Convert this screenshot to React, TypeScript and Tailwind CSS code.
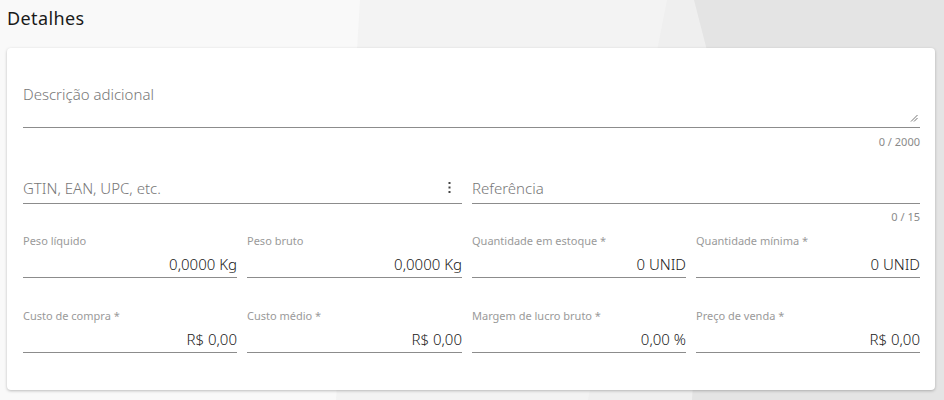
import React from 'react';

const font = { fontFamily: '"Noto Sans", "Open Sans", sans-serif' };

const Counter = ({ text, className = '' }: { text: string; className?: string }) => (
  <div className={`h-[14px] text-right text-[11px] leading-[14px] text-[#8a8a8a] ${className}`}>{text}</div>
);

const NumField = ({ label, value }: { label: string; value: string }) => (
  <div className="flex flex-col">
    <div className="h-[14px] text-[11px] leading-[14px] text-[#9a9a9a] truncate">{label}</div>
    <div className="mt-[6px] border-b border-[#8c8c8c] pb-[3px] text-right text-[15px] font-light leading-[20px] text-[#222]">
      {value}
    </div>
  </div>
);

export default function App() {
  return (
    <div className="relative h-[400px] w-[944px] overflow-hidden bg-[#f9f9f9]" style={font}>
      {/* background shapes */}
      <svg className="absolute inset-0" width="944" height="400" viewBox="0 0 944 400">
        <polygon points="360,0 944,0 944,400 336,400" fill="#f3f3f3" />
        <polygon points="667,0 944,0 944,400 588,400" fill="#efefef" />
        <polygon points="694,0 944,0 944,400 692,400 712,70" fill="#e4e4e4" />
      </svg>

      <div className="relative px-[7px]">
        <h2 className="h-[48px] pt-[6px] text-[18px] leading-[24px] tracking-[0.4px] text-[#1a1a1a]">Detalhes</h2>

        <div className="w-[928px] rounded-[4px] bg-white pl-[16px] pr-[15px] pt-[32px] pb-[37px] shadow-[0_1px_3px_rgba(0,0,0,0.25)]">
          {/* descricao */}
          <div className="relative h-[48px] border-b border-[#8c8c8c] pt-[2px]">
            <span className="text-[15px] font-light leading-[20px] text-[#777]">Descrição adicional</span>
            <svg className="absolute right-[2px] bottom-[5px]" width="8" height="8" viewBox="0 0 8 8">
              <line x1="1" y1="7.5" x2="7.5" y2="1" stroke="#777" strokeWidth="1" />
              <line x1="4" y1="7.5" x2="7.5" y2="4" stroke="#777" strokeWidth="1" />
            </svg>
          </div>
          <Counter text="0 / 2000" className="mt-[7px]" />

          {/* gtin / referencia */}
          <div className="grid grid-cols-[439px_1fr] gap-x-[10px]">
            <div className="flex h-[55px] items-end justify-between border-b border-[#8c8c8c] pb-[5px]">
              <span className="text-[15px] font-light leading-[20px] text-[#777]">GTIN, EAN, UPC, etc.</span>
              <svg className="mb-[5px] mr-[11px]" width="3" height="11" viewBox="0 0 3 11">
                <rect x="0.5" y="0" width="2" height="2" fill="#444" />
                <rect x="0.5" y="4.5" width="2" height="2" fill="#444" />
                <rect x="0.5" y="9" width="2" height="2" fill="#444" />
              </svg>
            </div>
            <div className="flex h-[55px] items-end border-b border-[#8c8c8c] pb-[5px]">
              <span className="text-[15px] font-light leading-[20px] text-[#777]">Referência</span>
            </div>
          </div>
          <Counter text="0 / 15" className="mt-[6px]" />

          <div className="mt-[10px] grid grid-cols-[214px_215px_214px_1fr] gap-x-[10px]">
            <NumField label="Peso líquido" value="0,0000 Kg" />
            <NumField label="Peso bruto" value="0,0000 Kg" />
            <NumField label="Quantidade em estoque *" value="0 UNID" />
            <NumField label="Quantidade mínima *" value="0 UNID" />
          </div>

          <div className="mt-[31px] grid grid-cols-[214px_215px_214px_1fr] gap-x-[10px]">
            <NumField label="Custo de compra *" value="R$ 0,00" />
            <NumField label="Custo médio *" value="R$ 0,00" />
            <NumField label="Margem de lucro bruto *" value="0,00 %" />
            <NumField label="Preço de venda *" value="R$ 0,00" />
          </div>
        </div>
      </div>
    </div>
  );
}
